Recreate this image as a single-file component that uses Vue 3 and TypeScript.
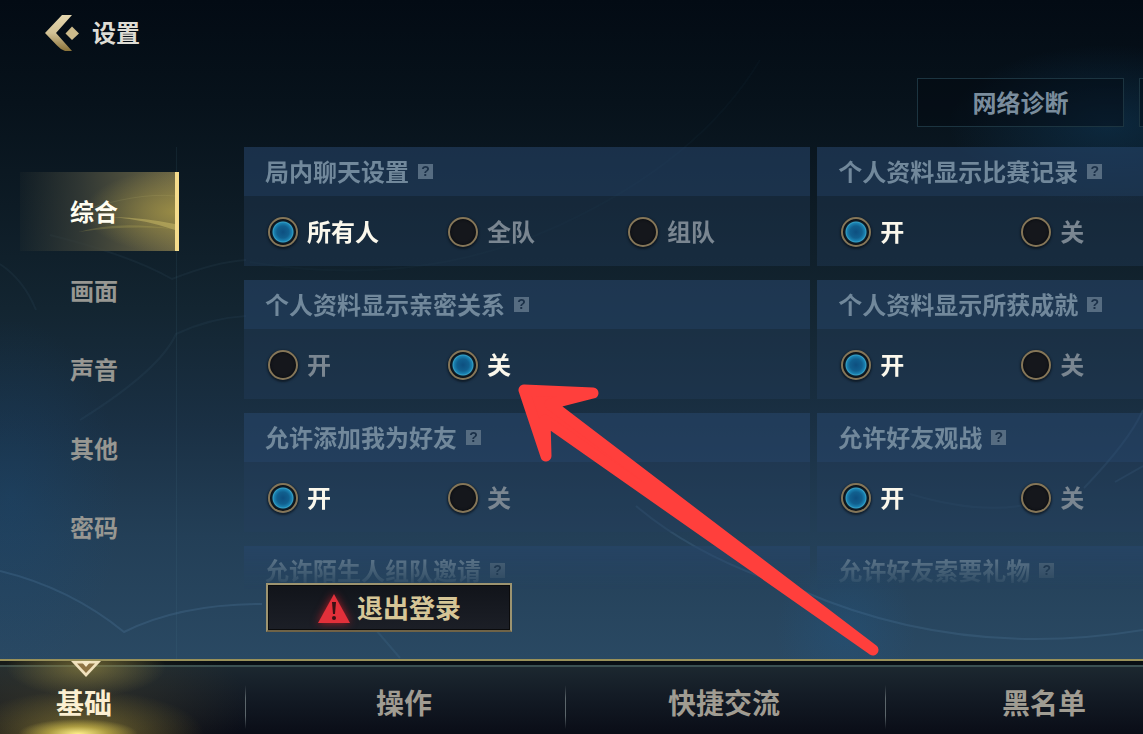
<script setup lang="ts">
import { ref, reactive } from 'vue'

interface SettingCard {
  id: string
  title: string
  options: string[]
}

const sections: string[] = ['综合', '画面', '声音', '其他', '密码']
const activeSection = ref('综合')

const tabs: string[] = ['基础', '操作', '快捷交流', '黑名单']
const activeTab = ref('基础')

const cards: SettingCard[] = [
  { id: 'chat', title: '局内聊天设置', options: ['所有人', '全队', '组队'] },
  { id: 'record', title: '个人资料显示比赛记录', options: ['开', '关'] },
  { id: 'intimacy', title: '个人资料显示亲密关系', options: ['开', '关'] },
  { id: 'achievement', title: '个人资料显示所获成就', options: ['开', '关'] },
  { id: 'friend', title: '允许添加我为好友', options: ['开', '关'] },
  { id: 'watch', title: '允许好友观战', options: ['开', '关'] },
  { id: 'stranger', title: '允许陌生人组队邀请', options: [] },
  { id: 'gift', title: '允许好友索要礼物', options: [] },
]

const values = reactive<Record<string, string>>({
  chat: '所有人',
  record: '开',
  intimacy: '关',
  achievement: '开',
  friend: '开',
  watch: '开',
})
</script>

<template>
  <div class="page">
    <svg class="backdrop" viewBox="0 0 1143 734" preserveAspectRatio="none" aria-hidden="true">
      <g fill="none" stroke="#6fa3cc" stroke-width="2">
        <path d="M0 571 Q70 588 124 632 Q180 604 262 604" opacity=".16" />
        <path d="M0 264 Q24 280 36 310" opacity=".06" />
        <path d="M50 235 Q130 255 172 279 Q215 262 246 260" opacity=".06" />
        <path d="M80 420 Q160 370 176 334 Q210 318 246 316" opacity=".06" />
        <path d="M250 262 Q420 290 560 225 T760 60" opacity=".03" />
        <path d="M636 506 Q700 560 800 590 Q960 660 1143 630" opacity=".14" />
        <path d="M1084 488 Q1130 440 1143 410" opacity=".14" />
        <path d="M1115 482 L1143 466" opacity=".14" />
        <path d="M910 494 Q980 515 1030 504" opacity=".07" />
        <path d="M376 630 L400 658" opacity=".1" />
      </g>
    </svg>

    <header class="top">
      <button class="back" type="button" aria-label="返回">
        <svg width="36" height="38" viewBox="0 0 36 38" aria-hidden="true">
          <defs>
            <linearGradient id="gold" x1="0" y1="0" x2="0" y2="1">
              <stop offset="0" stop-color="#e4d6ae" />
              <stop offset=".5" stop-color="#d3c296" />
              <stop offset="1" stop-color="#8a7239" />
            </linearGradient>
          </defs>
          <path d="M18 1 H28 L12 19 L28 37 H21 Q16 35 13 31.500 L1 19 Z" fill="url(#gold)" />
          <path d="M28 12.500 L35 19.500 L28 26 L21.500 19.500 Z" fill="#cdbb8b" />
        </svg>
      </button>
      <h1 class="title">设置</h1>
    </header>

    <div class="actions">
      <button class="diagnose" type="button">网络诊断</button>
      <span class="next-action" aria-hidden="true"></span>
    </div>

    <main class="content">
      <nav class="side" aria-label="设置分类">
        <button
          v-for="s in sections"
          :key="s"
          type="button"
          class="side-item"
          :class="{ active: s === activeSection }"
          @click="activeSection = s"
        >
          <svg
            v-if="s === activeSection"
            class="streaks"
            viewBox="0 0 159 79"
            preserveAspectRatio="none"
            aria-hidden="true"
          >
            <path d="M60 60 Q100 48 159 57 Q110 53 60 60 Z" fill="#d8c860" opacity=".2" />
            <path d="M95 45 Q130 46 159 52 L159 58 Q130 48 95 45 Z" fill="#e0d070" opacity=".4" />
            <path d="M60 40 Q120 20 159 24" fill="none" stroke="#d8c880" opacity=".12" />
          </svg>
          <span>{{ s }}</span>
        </button>
      </nav>

      <div class="panel">
        <div class="list">
          <section v-for="c in cards" :key="c.id" class="card">
            <div class="card-head">
              <h2 :id="c.id + '-title'">{{ c.title }}</h2>
              <button class="help" type="button">?</button>
            </div>
            <div
              v-if="c.options.length"
              class="options"
              role="radiogroup"
              :aria-labelledby="c.id + '-title'"
            >
              <label v-for="o in c.options" :key="o" class="option">
                <input v-model="values[c.id]" type="radio" :name="c.id" :value="o" />
                <span>{{ o }}</span>
              </label>
            </div>
          </section>
        </div>

        <button class="logout" type="button">
          <svg width="34" height="32" viewBox="0 0 34 32" aria-hidden="true">
            <path d="M17 2 L33 31 H1 Z" fill="#e2303a" />
            <path d="M15 10 H19 L18 22 H16 Z" fill="#3a1114" />
            <circle cx="17" cy="26" r="2" fill="#3a1114" />
          </svg>
          <span>退出登录</span>
        </button>
      </div>
    </main>

    <footer class="bottom">
      <nav class="tabs" aria-label="设置页签">
        <button
          v-for="t in tabs"
          :key="t"
          type="button"
          class="tab"
          :class="{ active: t === activeTab }"
          @click="activeTab = t"
        >
          {{ t }}
        </button>
      </nav>
      <svg class="marker" width="30" height="17" viewBox="0 0 30 17" aria-hidden="true">
        <path d="M0 0 H30 L15 16 Z" fill="#f1e2bd" />
        <path d="M6 2.500 H24 L15 12 Z" fill="#8f7444" />
        <path d="M10 0 H20 L15 6 Z" fill="#f6e9c8" />
      </svg>
    </footer>

    <svg class="pointer" width="364" height="278" viewBox="516 382 364 278" aria-hidden="true">
      <path
        d="M524 390 L593 393 L550 404 L873 650 L545 420 L546 456 Z"
        fill="#ff3f3c"
        stroke="#ff3f3c"
        stroke-width="11"
        stroke-linejoin="round"
      />
    </svg>
  </div>
</template>

<style>
body {
  background: #030b14;
}
</style>

<style scoped>
.page {
  position: relative;
  display: flex;
  flex-direction: column;
  height: 100vh;
  overflow: hidden;
  font-family: 'Noto Sans CJK SC', 'Noto Sans', sans-serif;
  font-weight: 700;
  background:
    radial-gradient(ellipse 160px 80px at 97% 17%, rgba(18, 70, 110, 0.4), transparent),
    radial-gradient(ellipse 110px 180px at 1% 68%, rgba(24, 74, 120, 0.3), transparent),
    radial-gradient(ellipse 70px 80px at 74% 86%, rgba(30, 95, 150, 0.25), transparent),
    linear-gradient(#030b14 0%, #07121b 14%, #0d1b25 28%, #132531 42%, #1a3044 58%, #233f57 73%, #2a4963 90%);
}

button {
  padding: 0;
  border: 0;
  background: none;
  font: inherit;
  color: inherit;
  cursor: pointer;
}

h1,
h2 {
  margin: 0;
  font: inherit;
}

.backdrop {
  position: absolute;
  inset: 0;
  width: 100%;
  height: 100%;
}

.top {
  position: relative;
  display: flex;
  align-items: center;
  gap: 12px;
  height: 66px;
  padding-left: 44px;
}

.back {
  display: flex;
}

.title {
  padding-bottom: 2px;
  color: #dedcd4;
  font-size: 24px;
  line-height: 36px;
}

.actions {
  position: relative;
  display: flex;
  justify-content: flex-end;
  gap: 15px;
  margin-top: 12px;
  height: 49px;
}

.diagnose {
  width: 207px;
  padding-bottom: 3px;
  border: 1px solid #1c3440;
  background: rgba(2, 8, 15, 0.4);
  color: #7a8d9d;
  font-size: 24px;
}

.next-action {
  width: 4px;
  box-sizing: border-box;
  border: 1px solid #1c3440;
  border-right: 0;
  background: rgba(2, 8, 15, 0.4);
}

.content {
  position: relative;
  flex: 1;
  display: flex;
  gap: 65px;
  min-height: 0;
  padding-top: 20px;
}

.side {
  flex: 0 0 159px;
  display: flex;
  flex-direction: column;
  margin: 0 0 0 20px;
  padding-top: 25px;
  background: linear-gradient(rgba(80, 130, 150, 0.12), rgba(80, 130, 150, 0.12)) 156px 0 / 1px 100% no-repeat;
}

.side-item {
  position: relative;
  height: 79px;
  padding: 0 0 2px 50px;
  text-align: left;
  color: #979792;
  font-size: 24px;
}

.side-item span {
  position: relative;
}

.side-item.active {
  color: #fffdf0;
  border-right: 4px solid #f5dc8c;
  background:
    radial-gradient(ellipse 90px 42px at 100% 50%, rgba(172, 155, 70, 0.7), transparent),
    linear-gradient(90deg, rgba(66, 70, 58, 0.1) 0%, rgba(58, 63, 56, 0.8) 40%, #6a6545 100%);
}

.streaks {
  position: absolute;
  inset: 0;
  width: 100%;
  height: 100%;
}

.panel {
  flex: 1;
  min-width: 0;
  display: flex;
  flex-direction: column;
  align-items: flex-start;
}

.list {
  flex: 1;
  min-height: 0;
  width: 100%;
  display: grid;
  grid-template-columns: 63% 63%;
  align-content: start;
  gap: 14px 7px;
  margin-bottom: -12px;
  overflow: hidden;
  mask-image: linear-gradient(#000 calc(100% - 48px), transparent calc(100% - 6px));
}

.card {
  background: rgba(36, 62, 94, 0.38);
}

.card-head {
  display: flex;
  align-items: center;
  gap: 9px;
  height: 49px;
  padding-left: 21px;
  background: rgba(42, 80, 122, 0.28);
}

.card-head h2 {
  padding-bottom: 1px;
  color: #71889b;
  font-size: 24px;
  line-height: 28px;
}

.help {
  width: 15px;
  height: 15px;
  background: #566c81;
  color: #1b3048;
  font-family: 'Liberation Sans', sans-serif;
  font-size: 14px;
  font-weight: 700;
  line-height: 15px;
}

.options {
  display: flex;
  height: 70px;
  padding: 2px 0 0 24px;
  box-sizing: border-box;
}

.option {
  flex: 0 0 180px;
  display: flex;
  align-items: center;
  gap: 9px;
  color: #7a8691;
  font-size: 24px;
  line-height: 36px;
}

.option span {
  padding-bottom: 2px;
}

.option input {
  appearance: none;
  flex: none;
  width: 30px;
  height: 30px;
  margin: 0;
  border: 2px solid #857658;
  border-radius: 50%;
  background: #15171c;
  box-shadow: 0 1px 2px 1px rgba(6, 14, 20, 0.6), inset 0 0 2px 1px #0c0e12;
}

.option input:checked {
  background:
    radial-gradient(circle at 50% 50%, #0d4f80 0, #11608f 6px, #1a82b2 9px, #38a3c9 10px, #0f2634 11px, #0f1d28 12px);
}

.option input:checked + span {
  color: #fbf8ec;
}

.logout {
  position: relative;
  display: flex;
  align-items: center;
  justify-content: center;
  gap: 6px;
  width: 246px;
  height: 49px;
  margin: 0 0 27px 22px;
  border: 2px solid #9d9470;
  border-bottom-color: #6f6347;
  background: linear-gradient(#11141a, #1c1f27);
  box-shadow: inset 0 0 0 1px #0b0b0c;
  color: #d6c697;
  font-size: 26px;
}

.logout span {
  padding-bottom: 3px;
}

.logout svg {
  filter: drop-shadow(0 0 4px rgba(230, 30, 40, 0.7));
}

.bottom {
  position: relative;
  flex: none;
  overflow: hidden;
  border-top: 2px solid #99915a;
  background: linear-gradient(#080f14 0 4px, #3a5052 4px 6px, #1c2830 6px, #141c26 45%, #0a0d17 100%);
}

.tabs {
  display: flex;
  height: 73px;
}

.tab {
  position: relative;
  flex: 0 0 28%;
  padding: 8px 2px 0 0;
  color: #a09c92;
  font-size: 28px;
}

.tab:first-child {
  flex-basis: 245px;
  padding-right: 77px;
}

.tab + .tab {
  background: linear-gradient(transparent, #5c666b 30%, #5c666b 70%, transparent) 0 24px / 1px 44px no-repeat;
}

.tab.active {
  color: #fbefd2;
  background:
    radial-gradient(ellipse 60px 15px at 78px 100%, #fff08a, rgba(220, 200, 80, 0.6) 50%, transparent),
    radial-gradient(ellipse 120px 44px at 84px 100%, rgba(190, 165, 60, 0.5), transparent),
    radial-gradient(ellipse 80px 30px at 86px 6px, rgba(180, 160, 70, 0.5), transparent),
    radial-gradient(ellipse 190px 80px at 60px 60%, rgba(80, 72, 44, 0.5), transparent);
}

.marker {
  position: absolute;
  left: 71px;
  top: 0;
}

.pointer {
  position: absolute;
  left: 516px;
  top: 382px;
  pointer-events: none;
}
</style>
